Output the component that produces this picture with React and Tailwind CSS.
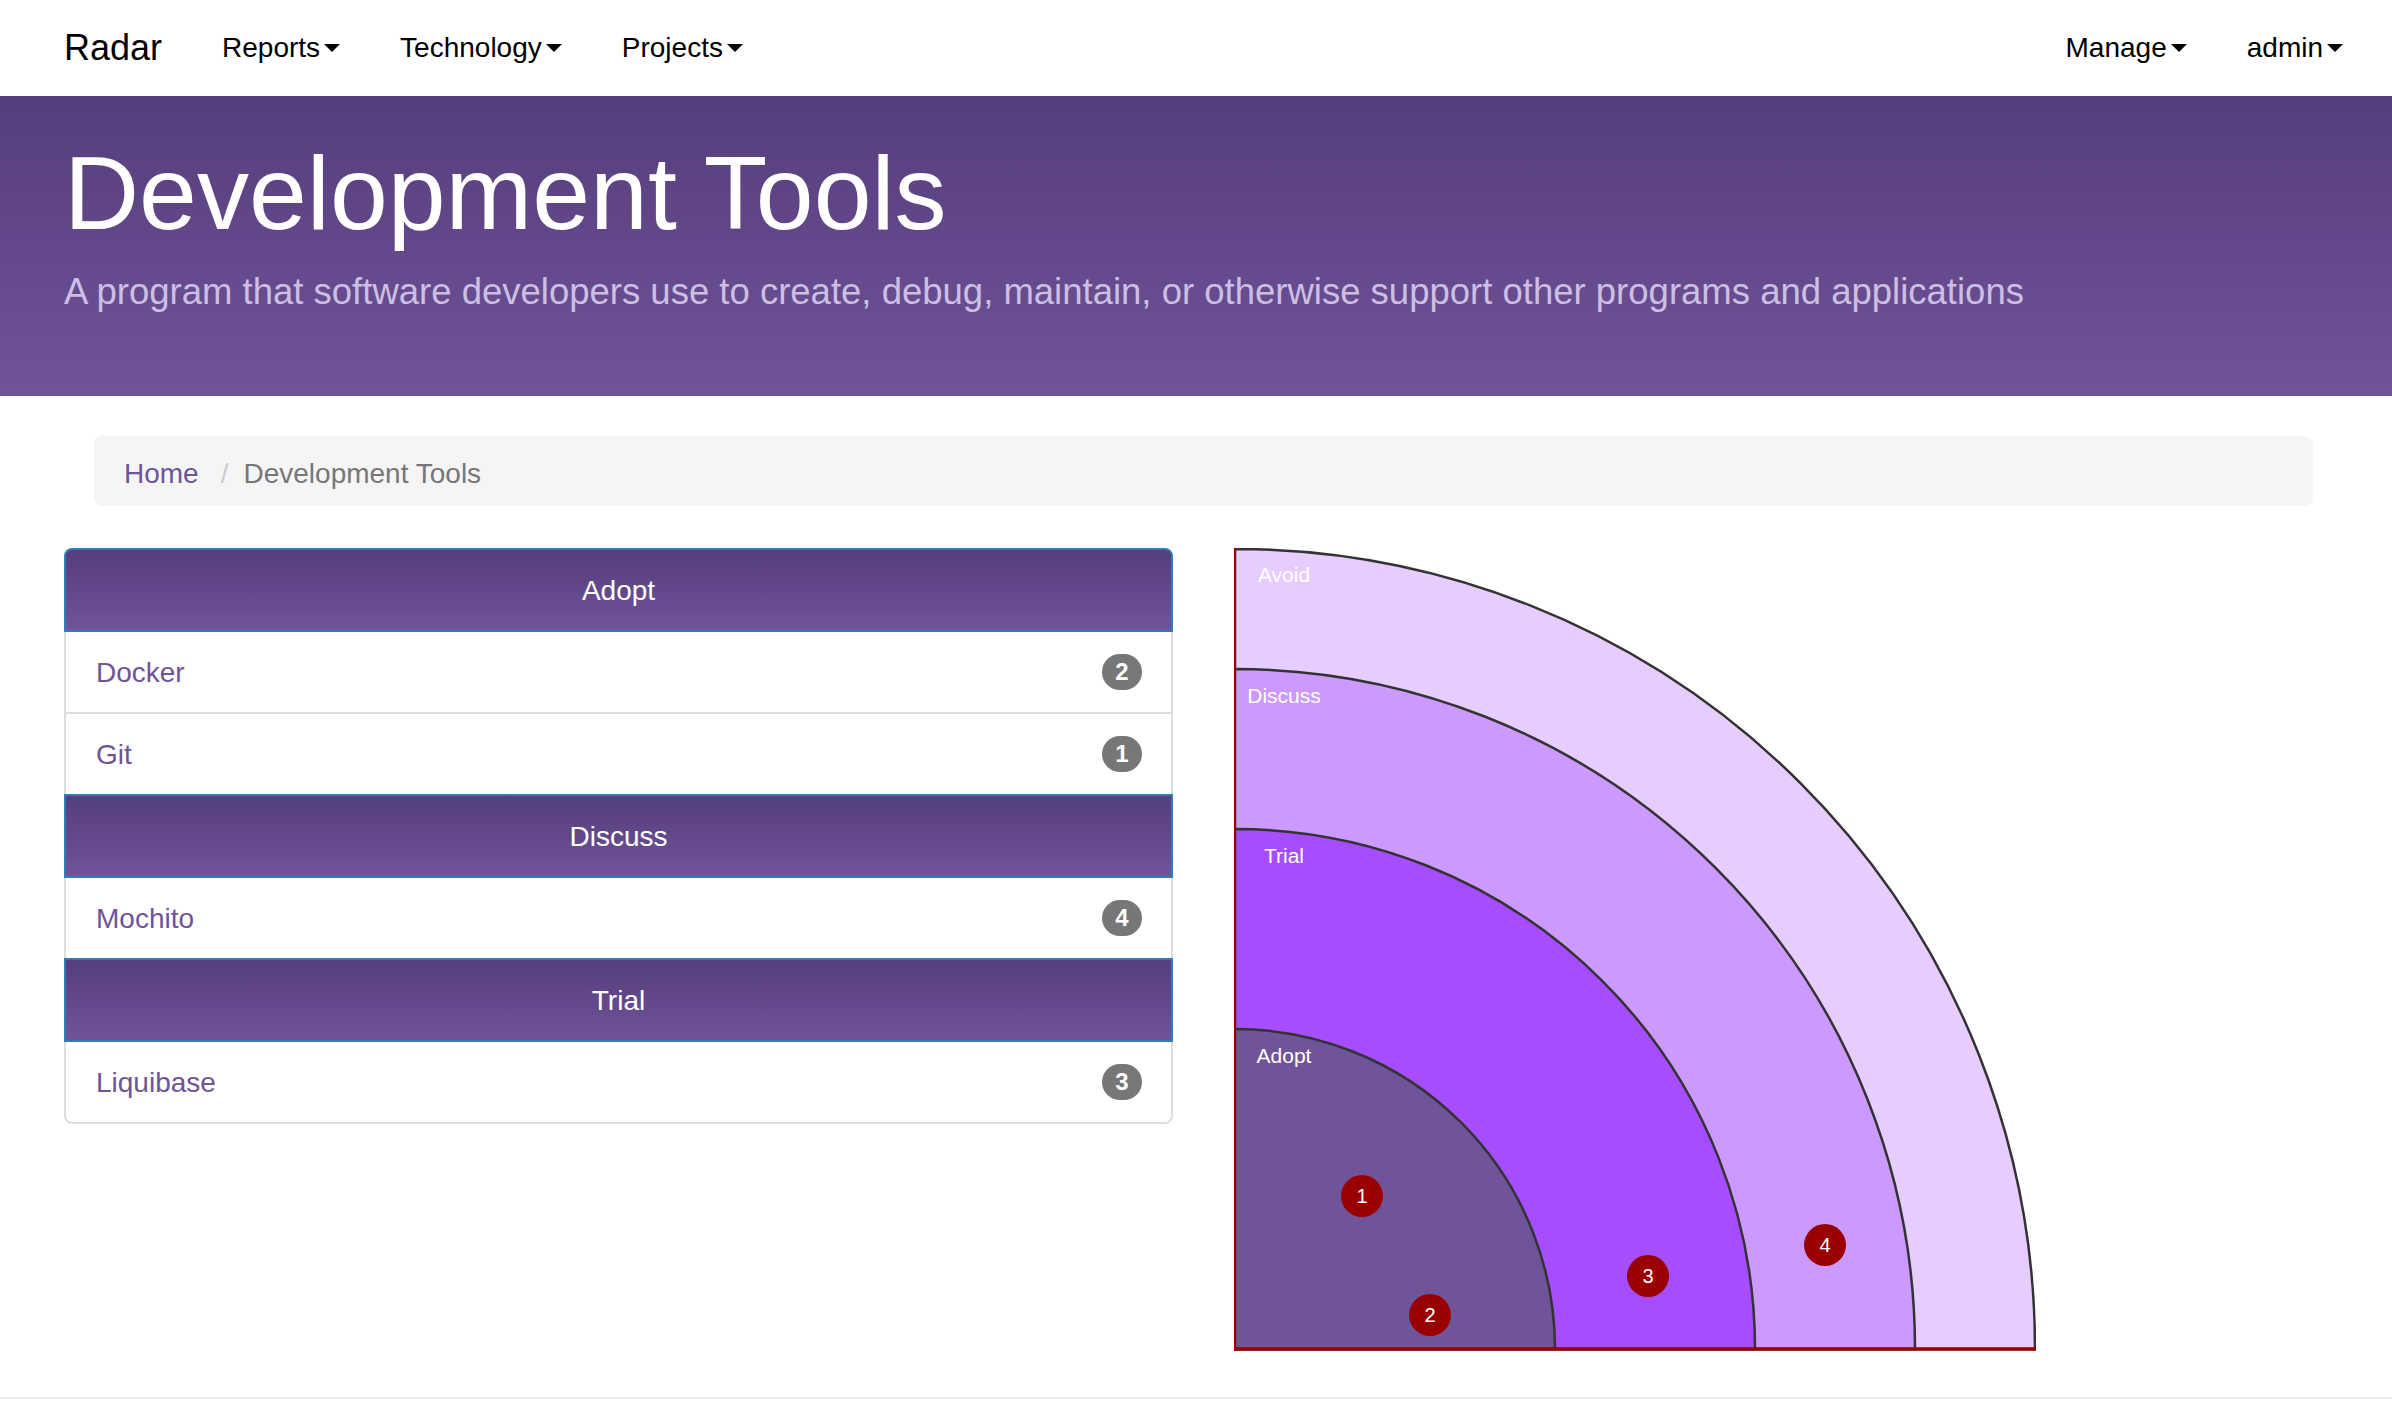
import React from 'react';

const groups = [
  { ring: 'Adopt', items: [{ name: 'Docker', id: 2 }, { name: 'Git', id: 1 }] },
  { ring: 'Discuss', items: [{ name: 'Mochito', id: 4 }] },
  { ring: 'Trial', items: [{ name: 'Liquibase', id: 3 }] },
];

const rings = [
  { name: 'Avoid', r: 800, fill: '#e6ccff', labelY: 34 },
  { name: 'Discuss', r: 680, fill: '#cc99ff', labelY: 155 },
  { name: 'Trial', r: 520, fill: '#a64dff', labelY: 315 },
  { name: 'Adopt', r: 320, fill: '#6f5499', labelY: 515 },
];

const blips = [
  { id: 1, x: 128, y: 648 },
  { id: 2, x: 196, y: 767 },
  { id: 3, x: 414, y: 728 },
  { id: 4, x: 591, y: 697 },
];

function Caret() {
  return <span className="inline-block ml-[4px] w-0 h-0 border-t-[8px] border-t-black border-x-[8px] border-x-transparent align-middle"></span>;
}

function NavItem({ label }) {
  return (
    <a className="px-[30px] flex items-center text-[28px] text-black">
      {label}
      <Caret />
    </a>
  );
}

function Navbar() {
  return (
    <nav className="h-[96px] flex items-center pl-[64px] pr-[19px] bg-white">
      <a className="text-[36px] text-black pr-[30px]">Radar</a>
      <NavItem label="Reports" />
      <NavItem label="Technology" />
      <NavItem label="Projects" />
      <div className="ml-auto flex">
        <NavItem label="Manage" />
        <NavItem label="admin" />
      </div>
    </nav>
  );
}

function RingList() {
  const rows = [];
  groups.forEach((g, gi) => {
    rows.push(
      <div
        key={g.ring}
        className={
          'relative z-10 h-[84px] -mb-[2px] border-2 border-[#337ab7] bg-gradient-to-b from-[#563d7c] to-[#6f5499] flex items-center justify-center pt-[2px] text-white text-[28px] ' +
          (gi === 0 ? 'rounded-t-[8px]' : '')
        }
      >
        {g.ring}
      </div>
    );
    g.items.forEach((item, ii) => {
      const last = gi === groups.length - 1 && ii === g.items.length - 1;
      rows.push(
        <div
          key={item.name}
          className={
            'h-[84px] -mb-[2px] border-2 border-[#ddd] bg-white flex items-center justify-between pl-[30px] pr-[29px] ' +
            (last ? 'rounded-b-[8px]' : '')
          }
        >
          <a className="text-[28px] text-[#6f5499] pt-[2px]">{item.name}</a>
          <span className="w-[40px] h-[36px] rounded-full bg-[#777] text-white text-[24px] font-bold flex items-center justify-center">
            {item.id}
          </span>
        </div>
      );
    });
  });
  return <div className="w-[1109px] flex flex-col">{rows}</div>;
}

function Radar() {
  const cx = 1;
  const cy = 801;
  return (
    <svg width="802" height="803" viewBox="0 0 802 803" className="block">
      {rings.map((ring) => (
        <path
          key={ring.name}
          d={`M ${cx} ${cy} L ${cx} ${cy - ring.r} A ${ring.r} ${ring.r} 0 0 1 ${cx + ring.r} ${cy} Z`}
          fill={ring.fill}
          stroke="#333"
          strokeWidth="2.5"
        />
      ))}
      <line x1="1" y1="0" x2="1" y2="803" stroke="#990000" strokeWidth="2" />
      <line x1="0" y1="801" x2="802" y2="801" stroke="#990000" strokeWidth="3.5" />
      {rings.map((ring) => (
        <text
          key={ring.name + '-label'}
          x="50"
          y={ring.labelY}
          textAnchor="middle"
          fill="#fff"
          fontSize="21"
          fontFamily="'Liberation Sans', Arial, sans-serif"
        >
          {ring.name}
        </text>
      ))}
      {blips.map((b) => (
        <g key={b.id}>
          <circle cx={b.x} cy={b.y} r="21" fill="#990000" />
          <text
            x={b.x}
            y={b.y + 7}
            textAnchor="middle"
            fill="#fff"
            fontSize="20"
            fontFamily="'Liberation Sans', Arial, sans-serif"
          >
            {b.id}
          </text>
        </g>
      ))}
    </svg>
  );
}

export default function App() {
  return (
    <div className="min-h-[1406px] bg-white text-[#333] font-['Liberation_Sans',Arial,sans-serif]">
      <Navbar />
      <header className="bg-gradient-to-b from-[#563d7c] to-[#6f5499] h-[300px] px-[64px] pt-[41px]">
        <h1 className="text-[104px] leading-[112px] text-white">Development Tools</h1>
        <p className="mt-[18px] text-[36.5px] leading-[50px] text-[#cdbfe3]">
          A program that software developers use to create, debug, maintain, or otherwise support other programs and applications
        </p>
      </header>
      <div className="px-[94px] mt-[40px]">
        <ol className="flex items-center bg-[#f5f5f5] rounded-[8px] pl-[30px] pt-[19px] pb-[13px] text-[28px] leading-[38px] w-[2219px]">
          <li><a className="text-[#6f5499]">Home</a></li>
          <li className="text-[#ccc] pl-[22px] pr-[15px]">/</li>
          <li className="text-[#777]">Development Tools</li>
        </ol>
      </div>
      <div className="flex items-start pl-[64px] mt-[42px] gap-[61px]">
        <RingList />
        <Radar />
      </div>
      <footer className="mt-[46px] border-t-2 border-[#eee] h-[10px]"></footer>
    </div>
  );
}
